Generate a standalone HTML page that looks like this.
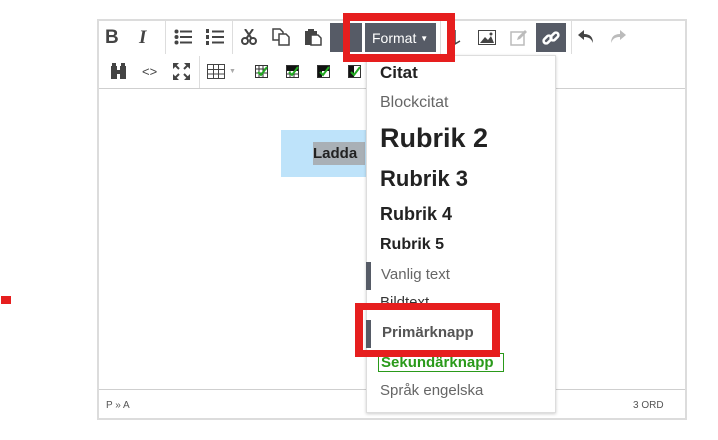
<!DOCTYPE html>
<html><head><meta charset="utf-8"><style>
*{box-sizing:border-box;margin:0;padding:0}
body{width:718px;height:440px;background:#fff;position:relative;overflow:hidden;font-family:"Liberation Sans",Arial,sans-serif}
.a{position:absolute}
.ed{left:97px;top:19px;width:590px;height:401px;border:2px solid #dcdcdc}
.sep{position:absolute;width:1px;background:#ddd}
.dk{position:absolute;background:#565b66}
.mi{position:absolute;left:380px;white-space:nowrap;line-height:1}
svg{position:absolute}
</style></head><body>
<div class="a" style="left:1px;top:296px;width:10px;height:8px;background:#e61e1e"></div>
<div class="a ed"></div>
<div class="a" style="left:99px;top:88px;width:586px;height:1px;background:#cfcfcf"></div>
<div class="a" style="left:99px;top:389px;width:586px;height:1px;background:#cfcfcf"></div>
<div class="sep" style="left:165px;top:21px;height:33px"></div>
<div class="sep" style="left:232px;top:21px;height:33px"></div>
<div class="sep" style="left:440px;top:21px;height:33px"></div>
<div class="sep" style="left:571px;top:21px;height:33px"></div>
<div class="sep" style="left:199px;top:56px;height:32px"></div>
<div class="a" style="left:105px;top:27px;font:bold 19px 'Liberation Sans';color:#444">B</div>
<div class="a" style="left:139px;top:27px;font:italic bold 19px 'Liberation Serif';color:#444">I</div>
<svg style="left:174px;top:29px" width="18" height="16"><g fill="#444"><circle cx="2.5" cy="2.5" r="2"/><circle cx="2.5" cy="8" r="2"/><circle cx="2.5" cy="13.5" r="2"/><rect x="6" y="1.5" width="12" height="2"/><rect x="6" y="7" width="12" height="2"/><rect x="6" y="12.5" width="12" height="2"/></g></svg>
<svg style="left:206px;top:29px" width="18" height="16"><g fill="#444"><rect x="0" y="0" width="3" height="4"/><rect x="0" y="6" width="3" height="4"/><rect x="0" y="12" width="3" height="4"/><rect x="6" y="1.5" width="12" height="2"/><rect x="6" y="7" width="12" height="2"/><rect x="6" y="12.5" width="12" height="2"/></g></svg>
<svg style="left:241px;top:29px" width="16" height="16"><g fill="none" stroke="#444" stroke-width="2"><circle cx="4" cy="12" r="3"/><circle cx="12" cy="12" r="3"/><path d="M5 10L12 0M11 10L4 0"/></g></svg>
<svg style="left:272px;top:28px" width="18" height="18"><g fill="#fff" stroke="#444" stroke-width="1.5"><path d="M1 1h7l3 3v8H1z"/><path d="M7 6h7l3 3v8H7z"/></g></svg>
<svg style="left:304px;top:28px" width="18" height="18"><g fill="#444"><rect x="1" y="3" width="12" height="14"/><rect x="4" y="1" width="6" height="3"/></g><path d="M7 7h7l3 3v7H7z" fill="#fff" stroke="#444" stroke-width="1.5"/></svg>
<div class="dk" style="left:330px;top:23px;width:32px;height:29px"></div>
<div class="dk" style="left:365px;top:23px;width:71px;height:29px"></div>
<div class="a" style="left:372px;top:30px;color:#fff;font-size:14px">Format <span style="font-size:8px;position:relative;top:-2px">&#9660;</span></div>
<svg style="left:455px;top:30px" width="8" height="16"><path d="M0 0v14l5-3" fill="none" stroke="#444" stroke-width="1.5"/></svg>
<svg style="left:478px;top:30px" width="18" height="15"><rect x="0.5" y="0.5" width="17" height="14" fill="#fff" stroke="#444"/><path d="M2 13l5-6 3 3 3-4 3 7z" fill="#444"/><circle cx="13" cy="4" r="1.5" fill="#444"/></svg>
<svg style="left:510px;top:29px" width="17" height="17"><rect x="1" y="3" width="13" height="13" fill="none" stroke="#bbb" stroke-width="1.5"/><path d="M7 11l1-3 7-7 2 2-7 7z" fill="#bbb"/></svg>
<div class="dk" style="left:536px;top:23px;width:30px;height:29px"></div>
<svg style="left:542px;top:29px" width="18" height="18"><g fill="none" stroke="#fff" stroke-width="2.5"><rect x="1" y="8" width="9" height="5" rx="2.5" transform="rotate(-45 5.5 10.5)"/><rect x="8" y="5" width="9" height="5" rx="2.5" transform="rotate(-45 12.5 7.5)"/></g></svg>
<svg style="left:578px;top:30px" width="16" height="14"><path d="M6 0L0 5l6 5V7c4 0 7 1 9 6 0-6-3-9-9-9z" fill="#444"/></svg>
<svg style="left:610px;top:30px" width="16" height="14"><path d="M10 0l6 5-6 5V7c-4 0-7 1-9 6 0-6 3-9 9-9z" fill="#bbb"/></svg>
<svg style="left:110px;top:63px" width="17" height="17"><path d="M1 3h6v13H1zM10 3h6v13h-6zM2 0h4v4H2zM11 0h4v4h-4zM6 7h5v4H6z" fill="#444"/></svg>
<div class="a" style="left:142px;top:64px;font-size:13px;color:#444">&lt;&gt;</div>
<svg style="left:173px;top:63px" width="17" height="17"><g fill="#444"><path d="M0 0h6L0 6zM17 0v6l-6-6zM0 17v-6l6 6zM17 17h-6l6-6z"/></g><g stroke="#444" stroke-width="2"><path d="M2 2l4 4M15 2l-4 4M2 15l4-4M15 15l-4-4"/></g></svg>
<svg style="left:207px;top:64px" width="18" height="15"><g fill="none" stroke="#444"><rect x="0.5" y="0.5" width="17" height="14"/><path d="M6.5 0v15M11.5 0v15M0 5.5h18M0 10h18"/></g></svg>
<div class="a" style="left:229px;top:68px;font-size:7px;color:#aaa">&#9660;</div>
<svg style="left:255px;top:65px" width="13" height="13"><rect x="0.5" y="0.5" width="12" height="12" fill="#fff" stroke="#333"/><path d="M4 0v13M8 0v13M0 4h13M0 8h13" stroke="#333"/><path d="M3 7l3 3 6-8" stroke="#2a2" stroke-width="2" fill="none"/></svg>
<svg style="left:286px;top:65px" width="13" height="13"><rect x="0" y="0" width="13" height="6" fill="#111"/><rect x="0.5" y="0.5" width="12" height="12" fill="none" stroke="#333"/><path d="M4 6v7M8 6v7M0 9h13" stroke="#333"/><path d="M3 7l3 3 6-8" stroke="#2a2" stroke-width="2" fill="none"/></svg>
<svg style="left:317px;top:65px" width="13" height="13"><rect x="0" y="0" width="13" height="6" fill="#111"/><rect x="0" y="0" width="5" height="13" fill="#111"/><rect x="0.5" y="0.5" width="12" height="12" fill="none" stroke="#333"/><path d="M3 7l3 3 6-8" stroke="#2a2" stroke-width="2" fill="none"/></svg>
<svg style="left:348px;top:65px" width="13" height="13"><rect x="0" y="0" width="6" height="13" fill="#111"/><rect x="0.5" y="0.5" width="12" height="12" fill="none" stroke="#333"/><path d="M3 7l3 3 6-8" stroke="#2a2" stroke-width="2" fill="none"/></svg>
<div class="a" style="left:281px;top:130px;width:90px;height:47px;background:#bee3fa"></div>
<div class="a" style="left:313px;top:142px;width:52px;height:23px;background:#a9b0b6"></div>
<div class="a" style="left:313px;top:145px;font:bold 15px 'Liberation Sans';color:#222">Ladda</div>
<div class="a" style="left:106px;top:400px;font-size:10px;color:#555">P » A</div>
<div class="a" style="left:633px;top:400px;font-size:10px;color:#555">3 ORD</div>
<div class="a" style="left:366px;top:55px;width:190px;height:358px;background:#fff;border:1px solid #ddd;box-shadow:0 1px 3px rgba(0,0,0,.2)"></div>
<div class="mi" style="top:64px;font-weight:bold;font-size:17px;color:#222">Citat</div>
<div class="mi" style="top:95px;font-size:16px;color:#666">Blockcitat</div>
<div class="mi" style="top:125px;font-weight:bold;font-size:27px;color:#222">Rubrik 2</div>
<div class="mi" style="top:168px;font-weight:bold;font-size:22px;color:#222">Rubrik 3</div>
<div class="mi" style="top:205px;font-weight:bold;font-size:18px;color:#222">Rubrik 4</div>
<div class="mi" style="top:237px;font-weight:bold;font-size:16px;color:#222">Rubrik 5</div>
<div class="a" style="left:366px;top:262px;width:5px;height:28px;background:#565b66"></div>
<div class="mi" style="left:381px;top:267px;font-size:15px;color:#666">Vanlig text</div>
<div class="mi" style="top:295px;font-size:15px;color:#333">Bildtext</div>
<div class="a" style="left:366px;top:320px;width:5px;height:28px;background:#565b66"></div>
<div class="mi" style="left:382px;top:325px;font-weight:bold;font-size:15px;color:#555">Primärknapp</div>
<div class="a" style="left:378px;top:353px;width:126px;height:19px;border:1px solid #2a9a1a"></div>
<div class="mi" style="left:381px;top:355px;font-weight:bold;font-size:15px;color:#2a9a1a">Sekundärknapp</div>
<div class="mi" style="top:383px;font-size:15px;color:#666">Språk engelska</div>
<div class="a" style="left:343px;top:13px;width:112px;height:49px;border:8px solid #e61e1e;border-left-width:7px"></div>
<div class="a" style="left:355px;top:303px;width:145px;height:54px;border:7px solid #e61e1e;border-left-width:8px;border-right-width:8px"></div>
</body></html>
